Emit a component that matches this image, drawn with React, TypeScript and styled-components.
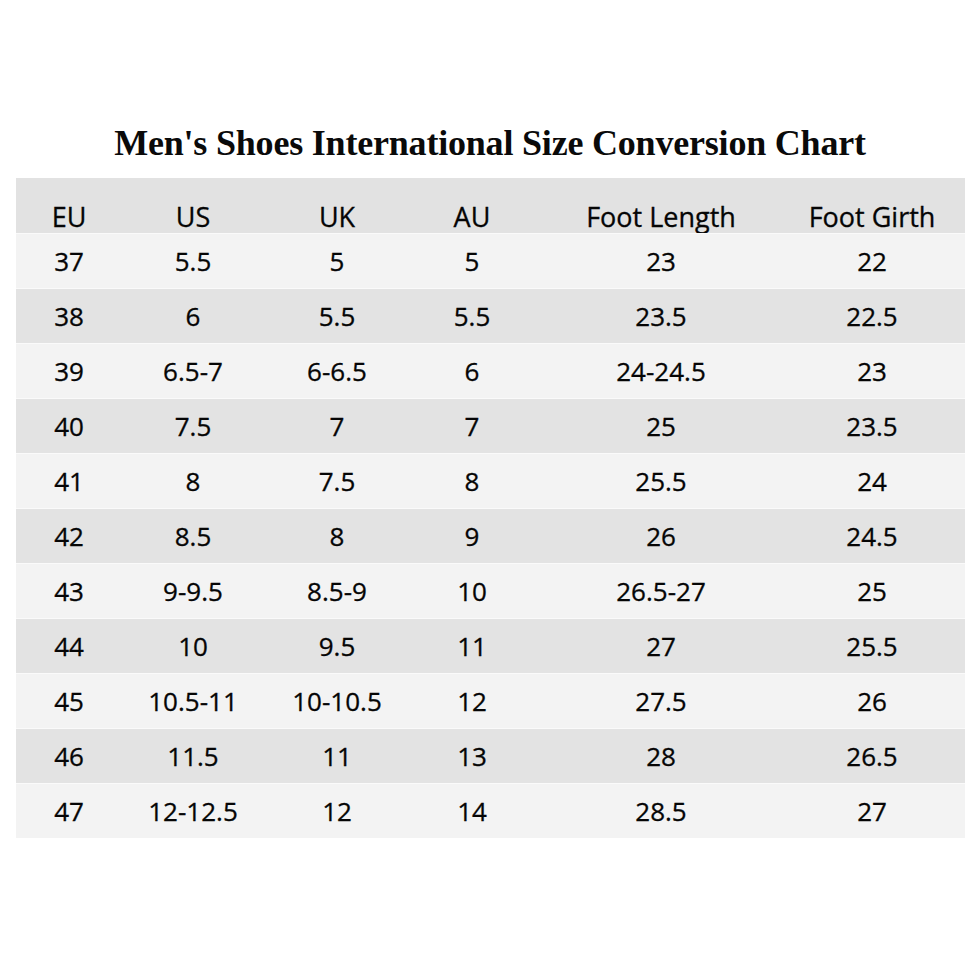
import React from "react";
import styled, { createGlobalStyle } from "styled-components";

const Global = createGlobalStyle`
  html, body { margin: 0; padding: 0; background: #ffffff; }
  body { width: 980px; height: 980px; overflow: hidden; }
`;

const Page = styled.div`
  width: 980px;
  height: 980px;
  display: flex;
  flex-direction: column;
  align-items: center;
  padding-top: 121px;
  box-sizing: border-box;
`;

const Title = styled.h1`
  margin: 0;
  height: 57px;
  font-family: "Liberation Serif", "Times New Roman", serif;
  font-weight: 700;
  font-size: 36px;
  line-height: 44px;
  color: #0a0a0a;
  letter-spacing: -0.2px;
  text-align: center;
  width: 100%;
`;

const Table = styled.div`
  width: 949px;
  margin-left: 1px;
  display: flex;
  flex-direction: column;
  font-family: "Open Sans", "Noto Sans", sans-serif;
  color: #050505;
  -webkit-text-stroke: 0.3px #050505;
`;

const cols = "106px 142px 146px 124px 254px 168px";

const HeaderRow = styled.div`
  display: grid;
  grid-template-columns: ${cols};
  height: 55px;
  background: #e2e2e2;
  align-items: end;
  box-sizing: border-box;
`;

const Row = styled.div<{ $shade: boolean }>`
  display: grid;
  grid-template-columns: ${cols};
  height: 55px;
  background: ${(p) => (p.$shade ? "#e3e3e3" : "#f3f3f3")};
  border-top: 1px solid #fafafa;
  box-sizing: border-box;
  align-items: center;
`;

const HeadCell = styled.div`
  text-align: center;
  font-size: 27px;
  line-height: 32px;
`;

const Cell = styled.div`
  text-align: center;
  font-size: 26px;
  line-height: 34px;
  padding-bottom: 1px;
`;

const headers = ["EU", "US", "UK", "AU", "Foot Length", "Foot Girth"];
const data = [
  ["37", "5.5", "5", "5", "23", "22"],
  ["38", "6", "5.5", "5.5", "23.5", "22.5"],
  ["39", "6.5-7", "6-6.5", "6", "24-24.5", "23"],
  ["40", "7.5", "7", "7", "25", "23.5"],
  ["41", "8", "7.5", "8", "25.5", "24"],
  ["42", "8.5", "8", "9", "26", "24.5"],
  ["43", "9-9.5", "8.5-9", "10", "26.5-27", "25"],
  ["44", "10", "9.5", "11", "27", "25.5"],
  ["45", "10.5-11", "10-10.5", "12", "27.5", "26"],
  ["46", "11.5", "11", "13", "28", "26.5"],
  ["47", "12-12.5", "12", "14", "28.5", "27"],
];

export default function App() {
  return (
    <>
      <Global />
      <Page>
        <Title>Men's Shoes International Size Conversion Chart</Title>
        <Table>
          <HeaderRow>
            {headers.map((h) => (
              <HeadCell key={h}>{h}</HeadCell>
            ))}
          </HeaderRow>
          {data.map((r, i) => (
            <Row key={r[0]} $shade={i % 2 === 1}>
              {r.map((c, j) => (
                <Cell key={j}>{c}</Cell>
              ))}
            </Row>
          ))}
        </Table>
      </Page>
    </>
  );
}
